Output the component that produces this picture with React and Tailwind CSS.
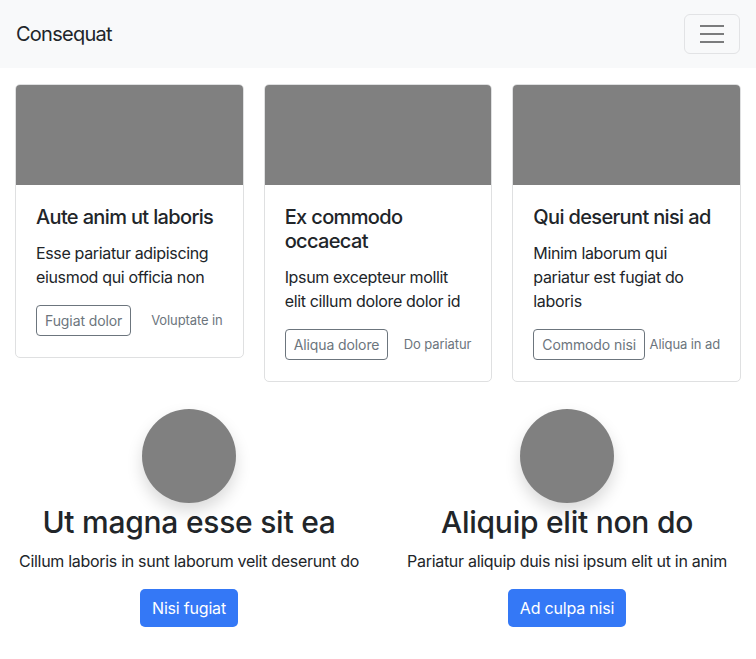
import React from "react";

const cards = [
  { title: "Aute anim ut laboris", text: "Esse pariatur adipiscing eiusmod qui officia non", btn: "Fugiat dolor", link: "Voluptate in" },
  { title: "Ex commodo occaecat", text: "Ipsum excepteur mollit elit cillum dolore dolor id", btn: "Aliqua dolore", link: "Do pariatur" },
  { title: "Qui deserunt nisi ad", text: "Minim laborum qui pariatur est fugiat do laboris", btn: "Commodo nisi", link: "Aliqua in ad" },
];

const features = [
  { title: "Ut magna esse sit ea", text: "Cillum laboris in sunt laborum velit deserunt do", btn: "Nisi fugiat" },
  { title: "Aliquip elit non do", text: "Pariatur aliquip duis nisi ipsum elit ut in anim", btn: "Ad culpa nisi" },
];

export default function App() {
  return (
    <div className="min-h-[659px] bg-white text-[#212529] font-['Inter',sans-serif]">
      <nav className="h-[68px] bg-[#f8f9fa] flex items-center justify-between pl-4 pr-4">
        <span className="text-[20px] leading-[30px] text-[#212529] tracking-[-0.75px]">Consequat</span>
        <button className="w-[56px] h-[40px] border border-[#e2e3e5] rounded-[6px] flex flex-col items-center justify-center gap-[6px]">
          <span className="block w-[24px] h-[2px] bg-[#7b7c7d]" />
          <span className="block w-[24px] h-[2px] bg-[#7b7c7d]" />
          <span className="block w-[24px] h-[2px] bg-[#7b7c7d]" />
        </button>
      </nav>

      <div className="grid grid-cols-3 gap-[20px] px-[15px] pt-[16px] items-start">
        {cards.map((c) => (
          <div key={c.title} className="border border-[#dfe0e1] rounded-[5px] overflow-hidden bg-white">
            <div className="h-[100px] bg-[#808080]" />
            <div className="px-[20px] pt-[20px] pb-[21px]">
              <h5 className="text-[20px] leading-[24px] font-medium mb-[12px] tracking-[-0.65px]">{c.title}</h5>
              <p className="text-[16px] leading-[24px] tracking-[-0.35px]">{c.text}</p>
              <div className="flex items-center justify-between mt-[16px]">
                <button className="h-[31px] px-[8px] border border-[#6c757d] rounded-[4px] text-[14px] text-[#6c757d] tracking-[-0.1px]">{c.btn}</button>
                <span className="text-[13px] text-[#6c757d] tracking-[-0.1px]">{c.link}</span>
              </div>
            </div>
          </div>
        ))}
      </div>

      <div className="grid grid-cols-2 pt-[27px]">
        {features.map((f) => (
          <div key={f.title} className="flex flex-col items-center text-center">
            <div className="w-[94px] h-[94px] rounded-full bg-[#808080] shadow-[0_8px_16px_rgba(0,0,0,0.15)]" />
            <h2 className="mt-[1px] text-[30px] leading-[36px] font-medium mb-[9px] tracking-[-0.25px]">{f.title}</h2>
            <p className="text-[16px] leading-[24px] mb-[16px] tracking-[-0.3px]">{f.text}</p>
            <button className="h-[38px] px-[12px] rounded-[5px] bg-[#3478f6] text-white text-[16px] tracking-[-0.2px]">{f.btn}</button>
          </div>
        ))}
      </div>
    </div>
  );
}
